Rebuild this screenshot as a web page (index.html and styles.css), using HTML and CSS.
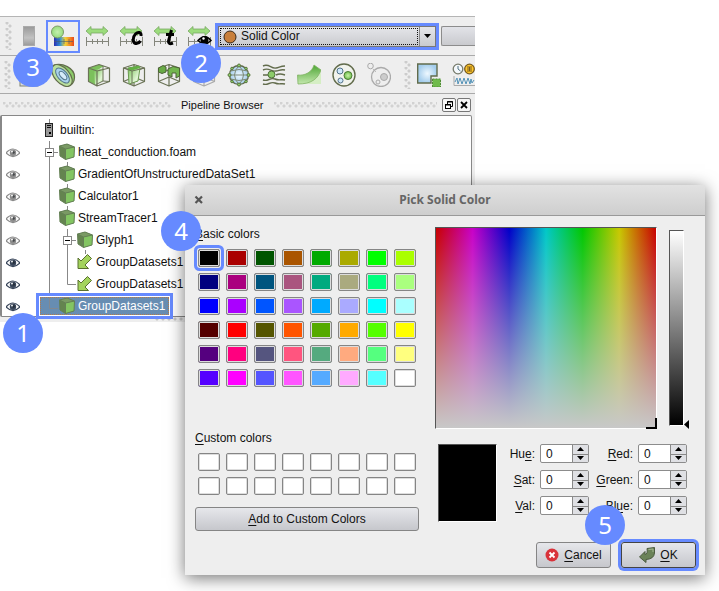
FILE: index.html
```html
<!DOCTYPE html>
<html lang="en">
<head>
<meta charset="utf-8">
<title>Pick Solid Color</title>
<link rel="stylesheet" href="styles.css">
</head>
<body>
<svg class="defs" width="0" height="0" aria-hidden="true">
  <defs>
    <linearGradient id="green" x1="0" y1="0" x2="1" y2="1"><stop offset="0" stop-color="#6fc04c"/><stop offset=".7" stop-color="#e2f5d6"/><stop offset="1" stop-color="#b5e09c"/></linearGradient>
    <linearGradient id="greenv" x1="0" y1="0" x2="0" y2="1"><stop offset="0" stop-color="#4ea634"/><stop offset="1" stop-color="#c4e8ae"/></linearGradient>
    <radialGradient id="ball"><stop offset="0" stop-color="#c8f0a8"/><stop offset="1" stop-color="#6cc04a"/></radialGradient>
    <radialGradient id="mint"><stop offset="0" stop-color="#c4f0b0"/><stop offset="1" stop-color="#97dc7c"/></radialGradient>
    <linearGradient id="rainbow"><stop offset="0" stop-color="#2b2bb0"/><stop offset=".3" stop-color="#2d8fd8"/><stop offset=".55" stop-color="#efd23a"/><stop offset=".8" stop-color="#f58a1f"/><stop offset="1" stop-color="#e8471c"/></linearGradient>
    <linearGradient id="metal" x1="0" y1="0" x2="0" y2="1"><stop offset="0" stop-color="#999"/><stop offset=".6" stop-color="#c2c2c2"/><stop offset="1" stop-color="#999"/></linearGradient>
    <radialGradient id="sky"><stop offset="0" stop-color="#eef8ff"/><stop offset="1" stop-color="#a4cdec"/></radialGradient>
    <symbol id="range" viewBox="0 0 26 26">
      <path d="M2 8 7 3.500V6H19V3.500L24 8 19 12.500V10H7V12.500Z" fill="#9bdc7c" stroke="#78a862" stroke-width=".8"/>
      <path d="M2.500 14V23M24.500 14V23M2 18.500H24M8.500 16V21M13.500 16V21M18.500 16V21" fill="none" stroke="#84867c"/>
    </symbol>
    <symbol id="eye" viewBox="0 0 14 10">
      <path d="M0 5Q7-3 14 5Q7 12 0 5Z" fill="#fff" stroke="currentColor" stroke-width="1.200"/>
      <circle cx="7" cy="4.800" r="3.200" fill="currentColor"/><circle cx="7.600" cy="4.500" r="1.200" fill="#151a20" fill-opacity=".6"/><circle cx="6" cy="3.500" r=".9" fill="#fff"/>
    </symbol>
    <symbol id="cube" viewBox="0 0 18 18">
      <path d="M1.500 3 9 1 16.500 4 16 14 7.500 16.500 2 13Z" fill="#64844f"/>
      <path d="M1.500 3 9 1 16.500 4 7.500 6Z" fill="#7a9a64"/>
      <path d="M7.500 6 16.500 4 16 14 7.500 16.500Z" fill="#83c562"/>
      <path d="M1.500 3 9 1 16.500 4 16 14 7.500 16.500 2 13ZM1.500 3 7.500 6 16.500 4M7.500 6V16.500" fill="none" stroke="#648055" stroke-width="1"/>
    </symbol>
    <symbol id="arrow" viewBox="0 0 18 18">
      <path d="M2 15.500V5L5 8 11.500 1.500 15.500 5.500 9 12 12.500 15.500Z" fill="#a3d35c" stroke="#59702f"/>
    </symbol>
    <symbol id="expander" viewBox="0 0 18 22">
      <path d="M14 11.500H18" stroke="#888"/><rect x="5.500" y="7.500" width="8" height="8" fill="#fff" stroke="#888"/><path d="M7 11.500H12" stroke="#000"/>
    </symbol>
    <symbol id="wirecube" viewBox="0 0 24 24">
      <path d="M1.500 5 12 1.500 22.500 5V18.500L12 23 1.500 18.500ZM1.500 5 12 8 22.500 5M12 8V23M12 1.500V14M1.500 18.500 12 14 22.500 18.500" fill="none" stroke="currentColor" stroke-width="1.200" stroke-linejoin="round"/>
    </symbol>
    <symbol id="outcube" viewBox="0 0 24 24">
      <path d="M1.500 5 12 1.500 22.500 5V18.500L10 23 1.500 18.500ZM1.500 5 10 8 22.500 5M10 8V23" fill="none" stroke="currentColor" stroke-width="1.200" stroke-linejoin="round"/>
    </symbol>
    <symbol id="up" viewBox="0 0 7 4"><path d="M0 4 3.500 0 7 4Z"/></symbol>
    <symbol id="down" viewBox="0 0 7 4"><path d="M0 0H7L3.500 4Z"/></symbol>
  </defs>
</svg>

<main class="app">
  <div class="toolbar colorbar">
    <i class="grip"></i>
    <button class="tool" aria-label="Color legend"><svg width="26" height="26"><rect x="7.500" y="3.500" width="11" height="19" fill="url(#metal)" stroke="#aaa"/></svg></button>
    <button class="tool marked" aria-label="Edit color map"><svg width="26" height="26"><rect x="4" y="14" width="20" height="9" fill="url(#rainbow)"/><path d="M4 18.500H23M9 16V21M14 16V21M19 16V21" stroke="#465c70" stroke-opacity=".6" fill="none"/><circle cx="7.500" cy="9" r="6" fill="url(#mint)" stroke="#7a9a68"/></svg></button>
    <button class="tool" aria-label="Rescale to data range"><svg width="26" height="26"><use href="#range"/></svg></button>
    <button class="tool" aria-label="Rescale to custom range"><svg width="26" height="26"><use href="#range"/><path d="M23 13C23.500 9 20 8.500 17.500 11 14.500 14 14.500 19.500 17.500 20.500 19.500 21 21 20 22.500 18" fill="none" stroke="#000" stroke-width="3"/></svg></button>
    <button class="tool" aria-label="Rescale to temporal range"><svg width="26" height="26"><use href="#range"/><path d="M19.500 7 16.500 18Q16 22 21 20M14 11.500H22" fill="none" stroke="#000" stroke-width="3"/></svg></button>
    <button class="tool" aria-label="Rescale to visible range"><svg width="26" height="26"><use href="#range"/><path d="M12 17.500Q19 10 25 17.500Q19 24 12 17.500Z" fill="#eee" stroke="#000" stroke-width="1.500"/><circle cx="18.500" cy="17" r="4" fill="#000"/><circle cx="17.500" cy="15.500" r="1.200" fill="#fff"/></svg></button>
    <div class="combo">
      <svg class="combo-dot" width="14" height="14" aria-hidden="true"><circle cx="7" cy="7" r="6" fill="#c87f3c" stroke="#3b2a1a"/></svg>
      <select aria-label="Color by"><option>Solid Color</option></select>
      <span class="combo-arrow"><svg width="7" height="4"><use href="#down"/></svg></span>
    </div>
    <button class="blank" aria-label="Component"></button>
  </div>

  <div class="toolbar filters">
    <i class="grip"></i>
    <button class="tool" aria-label="Calculator"><svg width="24" height="24"><rect x="3" y="3" width="18" height="20" fill="#ddd" stroke="#7d8170"/></svg></button>
    <button class="tool" aria-label="Contour"><svg width="24" height="24"><path d="M1 2.500C10-1 23 5 22.500 14.500 22.500 20 19 22.500 16.500 22.500Z" fill="#8ccc69" stroke="#626c4c" stroke-width="1.200"/><ellipse cx="10" cy="12.500" rx="13" ry="7.500" transform="rotate(49 10 12.500)" fill="#badf9d" stroke="#626c4c" stroke-width="1.200"/><ellipse cx="10.500" cy="12.500" rx="9" ry="4.800" transform="rotate(49 10.500 12.500)" fill="#a9d2ec" stroke="#55778c"/><ellipse cx="11" cy="12.500" rx="5" ry="2.500" transform="rotate(49 11 12.500)" fill="#d6ecfa" stroke="#55778c"/></svg></button>
    <button class="tool olive" aria-label="Clip"><svg width="24" height="24"><path d="M1.500 5 12 1.500 17 3 9 8V22L1.500 18.500Z" fill="#7cc05c"/><path d="M7 7 16 5.500V18L8 21.500Z" fill="url(#green)"/><use href="#outcube"/><path d="M16 3V18L9 21.500M16 18 22.500 18.500" fill="none" stroke="#6b7357"/></svg></button>
    <button class="tool olive" aria-label="Slice"><svg width="24" height="24"><use href="#wirecube"/><path d="M6 5 17 3 18 5 16 18 7 21Z" fill="url(#green)" stroke="#6a9a50"/><path d="M6 5 17 3 18 5 8 8Z" fill="#62b043"/><path d="M1.500 5 10 8 22.500 5M10 8V22" fill="none" stroke="#6b7357"/></svg></button>
    <button class="tool olive" aria-label="Threshold"><svg width="24" height="24"><use href="#wirecube"/><path d="M1.500 5 6 2.500 9 4V9L5 10.500 1.500 9Z" fill="#69ab47" stroke="#4c6236"/><path d="M11 6 16 3.500 22.500 5V13L19 15V10H15V14L11 12Z" fill="#72b64e" stroke="#4c6236"/></svg></button>
    <button class="tool faded" aria-label="Extract subset"><svg width="24" height="24"><use href="#wirecube"/></svg></button>
    <button class="tool" aria-label="Glyph"><svg width="24" height="24"><circle cx="12" cy="12" r="9.500" fill="url(#sky)" stroke="#626c4c" stroke-width="1.400"/><path d="M12 2.500Q3 12 12 21.500M12 2.500Q21 12 12 21.500M3.500 8Q12 5 20.500 8M3.500 16Q12 19 20.500 16M2.500 12H21.500" fill="none" stroke="#7d8a78"/><g fill="#8dce68" stroke="#59733f"><circle cx="12" cy="2.500" r="1.500"/><circle cx="12" cy="21.500" r="1.500"/><circle cx="2.500" cy="12" r="1.500"/><circle cx="21.500" cy="12" r="1.500"/><circle cx="5" cy="5.500" r="1.300"/><circle cx="19" cy="5.500" r="1.300"/><circle cx="5" cy="18.500" r="1.300"/><circle cx="19" cy="18.500" r="1.300"/></g></svg></button>
    <button class="tool" aria-label="Stream tracer"><svg width="24" height="24"><path d="M1 3C7 0 9 6 14 5 17 5 18 3 23 3M1 7C7 4 9 9 14 8 17 8 18 6 23 7M1 12H6M14 12C18 10 20 11 23 12M1 17C6 19 8 14 13 16 17 18 19 16 23 17M1 21C6 23 8 18 13 20 17 22 19 20 23 21" fill="none" stroke="#626c4c" stroke-width="1.400"/><circle cx="9.500" cy="11.500" r="3.500" fill="#8ccc69" stroke="#4e6e3a"/></svg></button>
    <button class="tool" aria-label="Warp"><svg width="24" height="24"><path d="M1 16H15Q24 14 24 6V21H1Z" fill="#d5eec4"/><path d="M.5 12C8 13 15 9 17 2L24 7C21 16 14 21 1 21Z" fill="url(#greenv)" stroke="#82b364" stroke-width=".8"/></svg></button>
    <button class="tool" aria-label="Group datasets"><svg width="24" height="24"><circle cx="12" cy="12" r="11" fill="#f1f3ed" stroke="#626c4c" stroke-width="1.400"/><circle cx="8" cy="8" r="3" fill="#cfe8fa" stroke="#53728a"/><circle cx="8.500" cy="17.500" r="2.500" fill="#cfe8fa" stroke="#53728a"/><circle cx="16" cy="12.500" r="4" fill="url(#ball)" stroke="#4c7a35"/></svg></button>
    <button class="tool" aria-label="Extract group"><svg width="24" height="24" fill="none" stroke="#aaa"><circle cx="14" cy="14" r="9.500" stroke-width="1.300"/><circle cx="3.500" cy="3" r="2.800"/><circle cx="11" cy="19" r="2"/><circle cx="17" cy="14" r="3.500" fill="#ccc"/><path d="M6 6 9 9" stroke-dasharray="1 2"/></svg></button>
    <i class="grip second"></i>
    <button class="tool" aria-label="Select region"><svg width="24" height="24"><path d="M.7 1H20V13H14V20H.7Z" fill="url(#sky)" stroke="#626c4c" stroke-width="1.400"/><rect x="15.500" y="16" width="8" height="8" fill="#70bb4c" stroke="#4f8b35" stroke-dasharray="2 1"/></svg></button>
    <button class="tool" aria-label="Plot over time"><svg width="24" height="24"><circle cx="6" cy="6" r="4.800" fill="#f4f8fb" stroke="#777b6c" stroke-width="1.300"/><path d="M6 3V6L8.500 8" fill="none" stroke="#4e7182"/><circle cx="17.500" cy="6" r="4.800" fill="#ffc629" stroke="#775b20" stroke-width="1.300"/><path d="M15 4H20M15 6H20M15 8H20M17.500 4V8" stroke="#775b20" fill="none"/><path d="M2 13V22.500H23" fill="none" stroke="#aaa"/><path d="M3 19 5 15 6 21 8 15 10 21 12 15 14 21 16 15 18 21 19 16 20 20 22 17" fill="none" stroke="#5493b8"/></svg></button>
  </div>

  <header class="dock-title">
    <i class="dots"></i><span>Pipeline Browser</span><i class="dots"></i>
    <div class="dock-buttons">
      <button aria-label="Float"><svg width="10" height="10"><path d="M3.500 4V1.500H8.500V6.500H6M3 2H9" fill="none" stroke="#000"/><rect x="1.500" y="4.500" width="5" height="4" fill="#fff" stroke="#000"/><path d="M1 5H7" stroke="#000"/></svg></button>
      <button aria-label="Close dock"><svg width="10" height="10"><path d="M2 2 8 8M8 2 2 8" stroke="#000" stroke-width="1.800"/></svg></button>
    </div>
  </header>

  <ul class="tree">
    <li><span class="vis"></span><svg class="cell" viewBox="0 0 18 22"><path d="M9.500 0V4" stroke="#888"/><rect x="5.500" y="4.500" width="7" height="13" fill="#999" stroke="#222"/><path d="M7 6.500H11M7 8.500H11" stroke="#111"/><rect x="9" y="13" width="2" height="2"/></svg><span class="name">builtin:</span></li>
    <li><svg class="vis"><use href="#eye"/></svg><svg class="cell"><path d="M9.500 0V22" stroke="#888"/><use href="#expander"/></svg><svg class="icon"><use href="#cube"/></svg><span class="name">heat_conduction.foam</span></li>
    <li><svg class="vis"><use href="#eye"/></svg><i class="cell line"></i><svg class="icon linked"><path d="M9.500-3V1" stroke="#888"/><use href="#cube"/></svg><span class="name">GradientOfUnstructuredDataSet1</span></li>
    <li><svg class="vis"><use href="#eye"/></svg><i class="cell line"></i><svg class="icon linked"><path d="M9.500-3V1" stroke="#888"/><use href="#cube"/></svg><span class="name">Calculator1</span></li>
    <li><svg class="vis"><use href="#eye"/></svg><i class="cell line"></i><svg class="icon linked"><path d="M9.500-3V1" stroke="#888"/><use href="#cube"/></svg><span class="name">StreamTracer1</span></li>
    <li><svg class="vis"><use href="#eye"/></svg><i class="cell line"></i><svg class="cell"><path d="M9.500 0V22" stroke="#888"/><use href="#expander"/></svg><svg class="icon"><use href="#cube"/></svg><span class="name">Glyph1</span></li>
    <li><svg class="vis on"><use href="#eye"/></svg><i class="cell line"></i><i class="cell line"></i><svg class="icon linked"><path d="M9.500-3V1" stroke="#888"/><use href="#arrow"/></svg><span class="name">GroupDatasets1</span></li>
    <li><svg class="vis on"><use href="#eye"/></svg><i class="cell line"></i><svg class="cell"><path d="M9.500 0V11.500H18" fill="none" stroke="#888"/></svg><svg class="icon"><use href="#arrow"/></svg><span class="name">GroupDatasets1</span></li>
    <li><svg class="vis on"><use href="#eye"/></svg><div class="selected"><svg class="cell"><path d="M9.500 0V11.500H18" fill="none" stroke="#888"/></svg><svg class="icon"><use href="#cube"/></svg><span class="name">GroupDatasets1</span></div></li>
  </ul>
  <i class="splitter"></i>
</main>

<section class="dialog" role="dialog" aria-labelledby="dialog-title">
  <header class="titlebar">
    <button class="close" aria-label="Close"><svg width="10" height="10"><path d="M1.500 1.500 8 8M8 1.500 1.500 8" stroke="#555" stroke-width="2.200"/></svg></button>
    <h1 id="dialog-title">Pick Solid Color</h1>
  </header>
  <div class="content">
    <div class="palette">
      <h2><u>B</u>asic colors</h2>
      <div class="swatches">
        <button class="marked" aria-label="#000000" style="background:#000000"></button><button aria-label="#aa0000" style="background:#aa0000"></button><button aria-label="#005500" style="background:#005500"></button><button aria-label="#aa5500" style="background:#aa5500"></button><button aria-label="#00aa00" style="background:#00aa00"></button><button aria-label="#aaaa00" style="background:#aaaa00"></button><button aria-label="#00ff00" style="background:#00ff00"></button><button aria-label="#aaff00" style="background:#aaff00"></button>
        <button aria-label="#00007f" style="background:#00007f"></button><button aria-label="#aa007f" style="background:#aa007f"></button><button aria-label="#00557f" style="background:#00557f"></button><button aria-label="#aa557f" style="background:#aa557f"></button><button aria-label="#00aa7f" style="background:#00aa7f"></button><button aria-label="#aaaa7f" style="background:#aaaa7f"></button><button aria-label="#00ff7f" style="background:#00ff7f"></button><button aria-label="#aaff7f" style="background:#aaff7f"></button>
        <button aria-label="#0000ff" style="background:#0000ff"></button><button aria-label="#aa00ff" style="background:#aa00ff"></button><button aria-label="#0055ff" style="background:#0055ff"></button><button aria-label="#aa55ff" style="background:#aa55ff"></button><button aria-label="#00aaff" style="background:#00aaff"></button><button aria-label="#aaaaff" style="background:#aaaaff"></button><button aria-label="#00ffff" style="background:#00ffff"></button><button aria-label="#aaffff" style="background:#aaffff"></button>
        <button aria-label="#550000" style="background:#550000"></button><button aria-label="#ff0000" style="background:#ff0000"></button><button aria-label="#555500" style="background:#555500"></button><button aria-label="#ff5500" style="background:#ff5500"></button><button aria-label="#55aa00" style="background:#55aa00"></button><button aria-label="#ffaa00" style="background:#ffaa00"></button><button aria-label="#55ff00" style="background:#55ff00"></button><button aria-label="#ffff00" style="background:#ffff00"></button>
        <button aria-label="#55007f" style="background:#55007f"></button><button aria-label="#ff007f" style="background:#ff007f"></button><button aria-label="#55557f" style="background:#55557f"></button><button aria-label="#ff557f" style="background:#ff557f"></button><button aria-label="#55aa7f" style="background:#55aa7f"></button><button aria-label="#ffaa7f" style="background:#ffaa7f"></button><button aria-label="#55ff7f" style="background:#55ff7f"></button><button aria-label="#ffff7f" style="background:#ffff7f"></button>
        <button aria-label="#5500ff" style="background:#5500ff"></button><button aria-label="#ff00ff" style="background:#ff00ff"></button><button aria-label="#5555ff" style="background:#5555ff"></button><button aria-label="#ff55ff" style="background:#ff55ff"></button><button aria-label="#55aaff" style="background:#55aaff"></button><button aria-label="#ffaaff" style="background:#ffaaff"></button><button aria-label="#55ffff" style="background:#55ffff"></button><button aria-label="#ffffff" style="background:#ffffff"></button>
      </div>
      <h2 class="custom-title"><u>C</u>ustom colors</h2>
      <div class="swatches custom">
        <button aria-label="Custom 1"></button><button aria-label="Custom 2"></button><button aria-label="Custom 3"></button><button aria-label="Custom 4"></button><button aria-label="Custom 5"></button><button aria-label="Custom 6"></button><button aria-label="Custom 7"></button><button aria-label="Custom 8"></button>
        <button aria-label="Custom 9"></button><button aria-label="Custom 10"></button><button aria-label="Custom 11"></button><button aria-label="Custom 12"></button><button aria-label="Custom 13"></button><button aria-label="Custom 14"></button><button aria-label="Custom 15"></button><button aria-label="Custom 16"></button>
      </div>
      <button class="push add"><span><u>A</u>dd to Custom Colors</span></button>
    </div>

    <div class="picker">
      <div class="fields">
        <div class="spectrum"><i class="corner"></i></div>
        <div class="value"><i class="ramp"></i><svg class="pointer" width="5" height="9"><path d="M5 0V9L0 4.500Z"/></svg></div>
      </div>
      <div class="numbers">
        <div class="preview"></div>
        <div class="spins">
          <label for="hue">Hu<u>e</u>:</label><div class="spin"><input id="hue" value="0"><button aria-label="Hue up"><svg width="7" height="4"><use href="#up"/></svg></button><button aria-label="Hue down"><svg width="7" height="4"><use href="#down"/></svg></button></div>
          <label for="red"><u>R</u>ed:</label><div class="spin"><input id="red" value="0"><button aria-label="Red up"><svg width="7" height="4"><use href="#up"/></svg></button><button aria-label="Red down"><svg width="7" height="4"><use href="#down"/></svg></button></div>
          <label for="sat"><u>S</u>at:</label><div class="spin"><input id="sat" value="0"><button aria-label="Sat up"><svg width="7" height="4"><use href="#up"/></svg></button><button aria-label="Sat down"><svg width="7" height="4"><use href="#down"/></svg></button></div>
          <label for="green-value"><u>G</u>reen:</label><div class="spin"><input id="green-value" value="0"><button aria-label="Green up"><svg width="7" height="4"><use href="#up"/></svg></button><button aria-label="Green down"><svg width="7" height="4"><use href="#down"/></svg></button></div>
          <label for="val"><u>V</u>al:</label><div class="spin"><input id="val" value="0"><button aria-label="Val up"><svg width="7" height="4"><use href="#up"/></svg></button><button aria-label="Val down"><svg width="7" height="4"><use href="#down"/></svg></button></div>
          <label for="blue">Bl<u>u</u>e:</label><div class="spin"><input id="blue" value="0"><button aria-label="Blue up"><svg width="7" height="4"><use href="#up"/></svg></button><button aria-label="Blue down"><svg width="7" height="4"><use href="#down"/></svg></button></div>
        </div>
      </div>
      <footer class="actions">
        <button class="push"><svg width="14" height="14"><circle cx="7" cy="7" r="6.500" fill="#d9323a"/><path d="M4.500 4.500 9.500 9.500M9.500 4.500 4.500 9.500" stroke="#fff" stroke-width="1.800"/></svg><span><u>C</u>ancel</span></button>
        <button class="push marked"><svg width="16" height="16"><path d="M8 1.500 15.500 .5V6Q15 12 7 12.500V15.500L.5 10 6 4.500V7.500Q9 7 8 1.500Z" fill="#6b8359" stroke="#4c5b40"/><path d="M9.500 2.500 14 2V5" fill="none" stroke="#a4b893"/></svg><span><u>O</u>K</span></button>
      </footer>
    </div>
  </div>
</section>

<span class="badge one">1</span>
<span class="badge two">2</span>
<span class="badge three">3</span>
<span class="badge four">4</span>
<span class="badge five">5</span>
</body>
</html>
```
FILE: styles.css
```css
* { box-sizing: border-box; }
:root { --mark: #668aff; --edge: #8c8c8c; --face: #eee; }
body {
  position: relative;
  margin: 0;
  padding-top: 16px;
  min-height: 100vh;
  overflow: hidden;
  background: #fff;
  color: #111;
  font: 12px/14px "Liberation Sans", Arial, sans-serif;
}
button, input, select { font: inherit; color: inherit; margin: 0; padding: 0; border: 0; background: none; }
svg { display: block; flex: none; }
u { text-underline-offset: 2px; }
h1, h2 { margin: 0; font: inherit; }
.defs { position: absolute; }

/* main window */
.app { width: 66%; background: var(--face); overflow: hidden; border-top: 1px solid #b5b5b5; }
.toolbar { display: flex; align-items: center; height: 38px; padding-left: 5px; border-bottom: 1px solid #aaa; overflow: hidden; }
.colorbar { height: 39px; }
.grip {
  flex: none; width: 7px; height: 28px;
  background:
    radial-gradient(circle at 2px 1px, #ccc 1px, transparent 2px) 0 0 / 7px 6px,
    radial-gradient(circle at 5px 4px, #ccc 1px, transparent 2px) 0 0 / 7px 6px;
}
.filters { padding-left: 4px; }
.second { margin: 0 0 0 8px; }
.tool { display: flex; flex: none; align-items: center; justify-content: center; width: 34px; height: 33px; }
.filters .tool { width: 35px; }
.olive { color: #6b7357; }
.faded { color: #aaa; }
.tool.marked { border: 2px solid var(--mark); }
.combo { position: relative; flex: 1; margin: 0 5px 0 2px; height: 21px; box-shadow: 0 0 0 3px var(--mark); border: 1px solid #777; background: linear-gradient(#e5e6ea, #c9cace); }
.combo select { appearance: none; width: 100%; height: 19px; padding-left: 22px; outline: none; }
.combo::before { content: ""; position: absolute; inset: 1px 17px 1px 1px; border: 1px dotted #111; }
.combo-dot { position: absolute; left: 4px; top: 3px; }
.combo-arrow { position: absolute; right: 0; top: 0; bottom: 0; width: 16px; display: flex; align-items: center; justify-content: center; border-left: 1px solid #888; pointer-events: none; }
.blank { flex: none; width: 34px; height: 20px; border: 1px solid var(--edge); border-right: 0; border-radius: 2px 0 0 2px; background: linear-gradient(#e2e3e8, #c9cace); }
.dock-title { display: flex; align-items: center; gap: 10px; height: 21px; padding: 0 4px 0 3px; font-size: 11px; }
.dots { flex: 1; height: 6px; background:
    radial-gradient(circle at 1px 1px, #d2d2d2 1px, transparent 2px) 0 0 / 6px 6px,
    radial-gradient(circle at 4px 4px, #d2d2d2 1px, transparent 2px) 0 0 / 6px 6px; }
.dots:first-child { flex-basis: 5px; }
.dock-buttons { display: flex; gap: 1px; margin-left: -5px; }
.dock-buttons button { display: flex; align-items: center; justify-content: center; width: 14px; height: 14px; border: 1px solid #777; border-radius: 2px; background: #f6f6f6; }

/* pipeline tree */
.tree { list-style: none; margin: 0 3px 0 0; padding: 3px 0 0; border: 1px solid #888; border-width: 1px 1px 1px 2px; border-radius: 2px; background: #fff; }
.tree li { display: flex; align-items: center; height: 22px; }
.tree li:last-child { height: 21px; }
.vis { flex: none; width: 14px; height: 10px; margin: 2px 20px 0 4px; color: #8b8b8b; }
.vis.on { color: #39465a; }
.cell { flex: none; width: 18px; height: 22px; }
.line { background: linear-gradient(#888, #888) 9px 0 / 1px 100% no-repeat; }
.icon { width: 18px; height: 18px; }
.linked { overflow: visible; }
.name { padding-left: 2px; white-space: nowrap; }
.selected { display: flex; align-items: center; height: 18px; padding-right: 4px; background: #678db2; color: #fff; outline: 1px dotted #b57a4a; outline-offset: -1px; box-shadow: 0 0 0 1px #fff, 0 0 0 4px var(--mark); }
.selected .cell { height: 18px; opacity: .8; }
.splitter { display: block; height: 5px; margin-left: 155px; background: radial-gradient(circle at 2px 2px, #c4c4c4 1px, transparent 2px) 0 0 / 6px 5px; }

/* dialog */
.dialog { position: absolute; left: 185px; right: 14px; top: 185px; background: var(--face); box-shadow: 0 3px 16px rgba(0, 0, 0, .55); }
.titlebar { display: flex; align-items: center; height: 31px; padding: 0 9px 1px; border-bottom: 1px solid #999; background: linear-gradient(#e2e2e2, #cecece); }
.close { width: 10px; height: 10px; }
.titlebar h1 { flex: 1; padding-right: 10px; text-align: center; font: bold 12px/18px "Noto Sans", "Open Sans", sans-serif; color: #666; }
.content { display: flex; gap: 16px; padding: 11px 9px 7px 10px; }
.palette { flex: none; }
.swatches { display: grid; grid-template-columns: repeat(8, 22px); gap: 6px; margin: 8px 3px 0; }
.swatches button { height: 18px; border: 1px solid #858585; border-radius: 2px; box-shadow: inset 0 0 0 1px #ddd; }
.swatches .marked { box-shadow: inset 0 0 0 1px #ddd, 0 0 0 1px #eee, 0 0 0 4px var(--mark); }
.custom button { background: #fff; }
.custom-title { margin-top: 44px; }
.push { display: flex; align-items: center; justify-content: center; gap: 5px; height: 26px; border: 1px solid #858585; border-radius: 3px; background: linear-gradient(#e6e7eb, #c6c7cc); }
.add { width: 100%; height: 24px; margin-top: 12px; }
.picker { flex: 1; min-width: 0; }
.fields { display: flex; gap: 12px; }
.spectrum {
  position: relative; flex: 1; height: 202px; border: 1px solid #555; border-right-color: #fff; border-bottom-color: #fff;
  background: linear-gradient(transparent, #c8c8c8), linear-gradient(90deg, #c80000, #c800c8, #0000c8, #00c8c8, #00c800, #c8c800, #c80000);
}
.corner { position: absolute; right: -1px; bottom: -1px; width: 11px; height: 11px; border: solid #000; border-width: 0 2px 2px 0; }
.value { position: relative; width: 27px; padding: 3px 12px 3px 0; }
.ramp { display: block; height: 196px; border: 1px solid #555; border-right-color: #fff; border-bottom-color: #fff; background: linear-gradient(#fff, #000); }
.pointer { position: absolute; right: 7px; bottom: 0; }
.numbers { display: flex; gap: 12px; margin: 15px 9px 0 3px; }
.preview { width: 60px; height: 78px; margin-bottom: -1px; background: #000; border: 1px solid #555; border-right-color: #fff; border-bottom-color: #fff; }
.spins { flex: 1; display: grid; grid-template-columns: 26px 49px 39px 49px; justify-content: end; column-gap: 5px; row-gap: 7px; align-content: start; align-items: center; }
.spins label { justify-self: end; }
.spin { display: grid; grid-template: 1fr 1fr / 1fr 16px; height: 19px; border: 1px solid var(--edge); border-radius: 2px; background: #fff; overflow: hidden; }
.spin input { grid-row: 1 / 3; width: 100%; min-width: 0; padding-left: 5px; outline: none; }
.spin button { display: flex; align-items: center; justify-content: center; border-left: 1px solid #888; background: #dfe0e4; }
.spin button + button { border-top: 1px solid #888; }
.actions { display: flex; justify-content: flex-end; gap: 10px; margin-top: 21px; }
.actions .push { width: 75px; }
.actions .marked { border-color: #444; box-shadow: 0 0 0 3px var(--mark); }

/* step badges */
.badge { position: absolute; width: 40px; height: 40px; border-radius: 50%; background: var(--mark); color: #fff; text-align: center; font: 24px/39px "Noto Sans", "Open Sans", sans-serif; }
.one { left: 3px; top: 313px; }
.two { left: 181px; top: 43px; }
.three { left: 13px; top: 47px; }
.four { left: 161px; top: 211px; }
.five { left: 585px; top: 505px; }
```
